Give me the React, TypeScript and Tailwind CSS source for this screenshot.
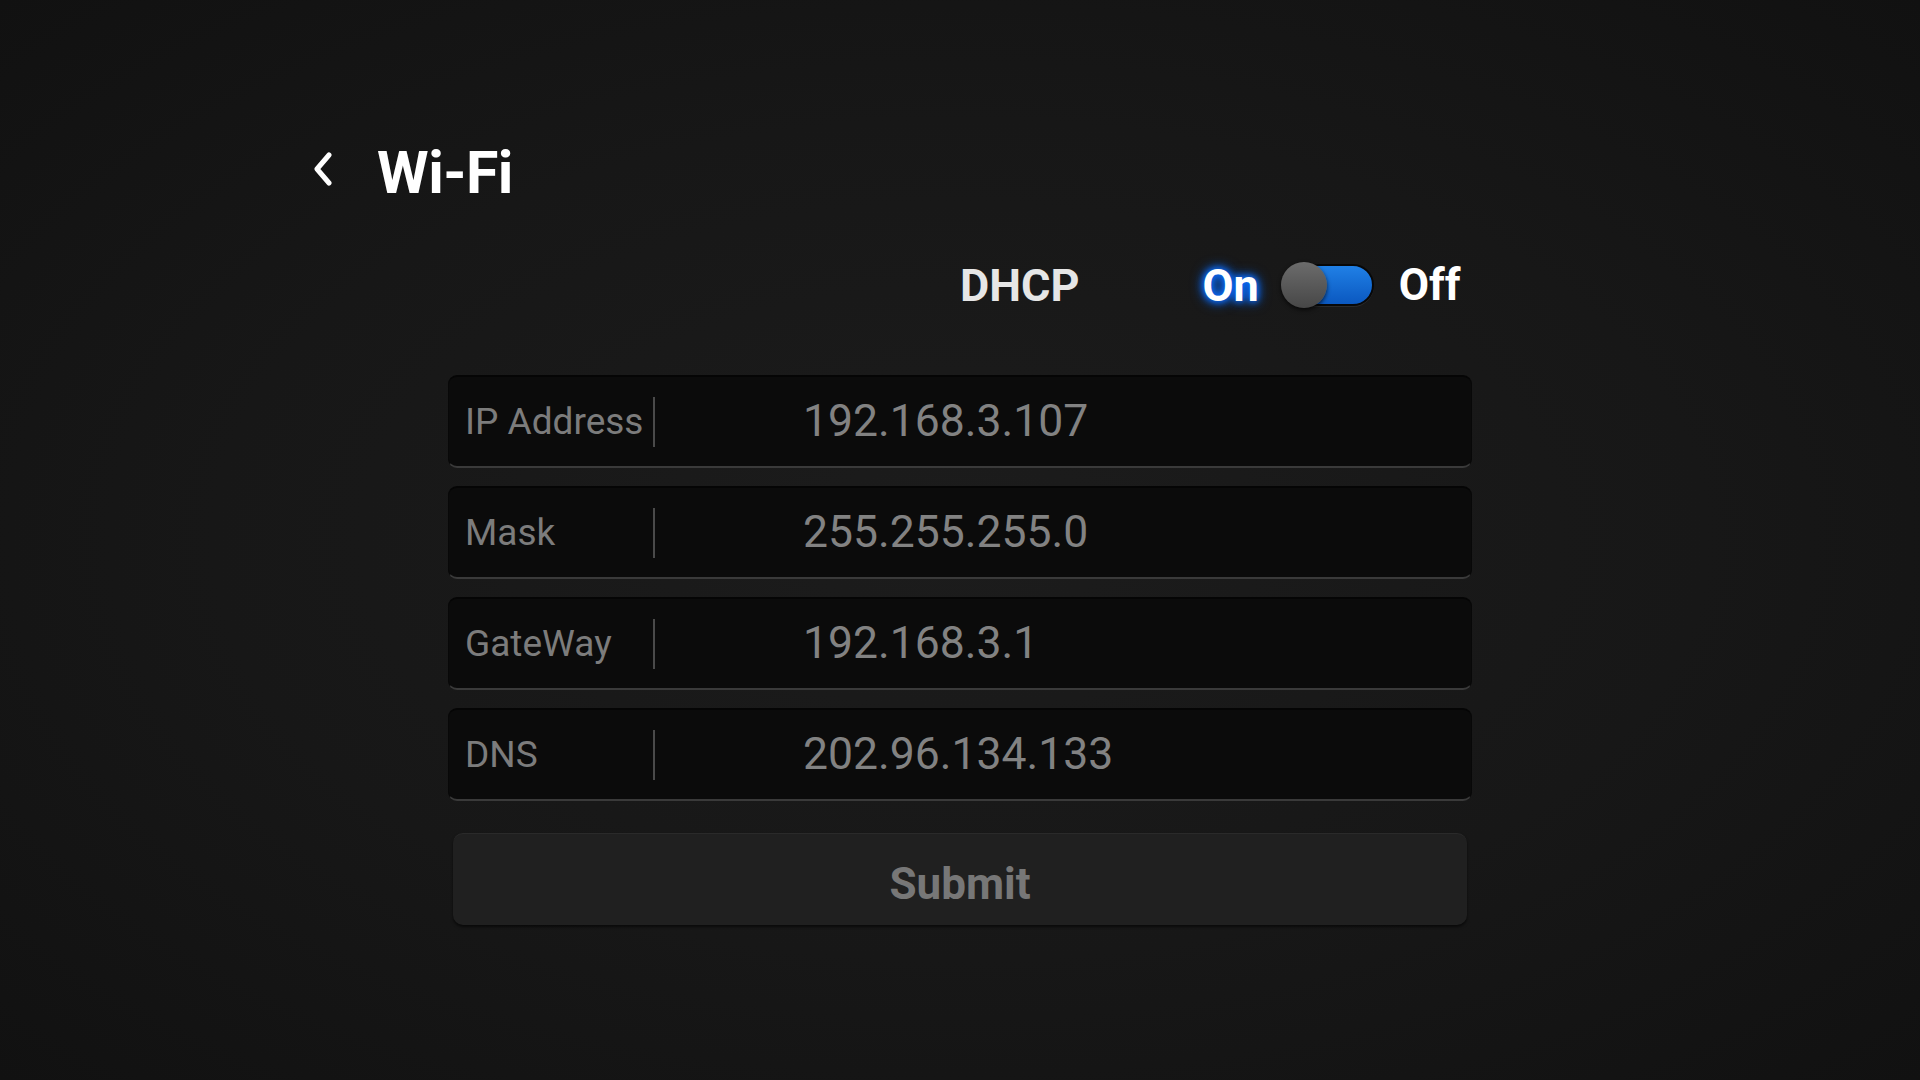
import { useState } from 'react'

const FIELDS = [
  { label: 'IP Address', value: '192.168.3.107' },
  { label: 'Mask', value: '255.255.255.0' },
  { label: 'GateWay', value: '192.168.3.1' },
  { label: 'DNS', value: '202.96.134.133' },
]

function Toggle({ on, onChange }: { on: boolean; onChange: () => void }) {
  return (
    <button
      type="button"
      onClick={onChange}
      className="relative flex h-[46px] w-[93px] items-center"
    >
      <span className="ml-[17px] h-[42px] w-[76px] rounded-full border-2 border-[#080808] bg-gradient-to-b from-[#2080e6] to-[#0b58c0] shadow-[0_1px_0_#2a2a2a]" />
      <span
        className={
          on
            ? 'absolute left-0 top-0 h-[46px] w-[46px] rounded-full bg-gradient-to-b from-[#6c6c6c] to-[#474747] shadow-[0_2px_4px_rgba(0,0,0,0.7)]'
            : 'absolute right-0 top-0 h-[46px] w-[46px] rounded-full bg-gradient-to-b from-[#6c6c6c] to-[#474747] shadow-[0_2px_4px_rgba(0,0,0,0.7)]'
        }
      />
    </button>
  )
}

export default function App() {
  const [dhcp, setDhcp] = useState(true)

  return (
    <div className="min-h-screen w-full bg-[radial-gradient(ellipse_at_center,#1c1c1c_0%,#171717_55%,#111111_100%)] font-['Roboto',sans-serif]">
      <div className="mx-auto w-[1294px] pt-[150px]">
        {/* header */}
        <div className="flex h-[44px] items-center">
          <svg width="22" height="34" viewBox="0 0 22 34" className="-ml-[1px] -mt-[7px]">
            <path d="M17 3 L5 17 L17 31" fill="none" stroke="#ffffff" strokeWidth="5" strokeLinecap="round" strokeLinejoin="round" />
          </svg>
          <h1 className="ml-[43px] text-[59px] font-bold leading-none tracking-[-0.5px] text-white">Wi-Fi</h1>
        </div>

        <div className="ml-[135px] w-[1024px]">
          {/* DHCP row */}
          <div className="mt-[68px] flex h-[46px] items-center">
            <span className="ml-[512px] text-[45px] font-bold leading-none text-[#e6e6e6]">DHCP</span>
            <span className="ml-[123px] text-[45px] font-bold leading-none text-white [text-shadow:0_0_6px_#0a6cff,0_0_10px_#0a6cff,0_0_14px_#0a6cff]">
              On
            </span>
            <div className="ml-[22px]">
              <Toggle on={dhcp} onChange={() => setDhcp(!dhcp)} />
            </div>
            <span className="ml-[25px] text-[44px] font-bold leading-none text-white">Off</span>
          </div>

          {/* fields */}
          <div className="mt-[67px] flex flex-col gap-[18px]">
            {FIELDS.map((f) => (
              <div
                key={f.label}
                className="flex h-[93px] items-center rounded-[9px] border-x border-t-2 border-b-2 border-x-[#080808] border-t-[#050505] border-b-[#3a3a3a] bg-[#0b0b0b]"
              >
                <span className="ml-[16px] w-[188px] text-[37px] leading-none text-[#7c7c7c]">{f.label}</span>
                <span className="h-[50px] w-[2px] bg-[#4a4a4a]" />
                <span className="ml-[148px] text-[44.5px] leading-none text-[#828282]">{f.value}</span>
              </div>
            ))}
          </div>

          {/* submit */}
          <button
            type="button"
            className="mx-auto mt-[32px] flex h-[92px] w-[1014px] items-center justify-center rounded-[10px] border-t border-t-[#2a2a2a] bg-[#202020] pt-[8px] text-[44px] font-bold leading-none text-[#777777] shadow-[0_2px_3px_rgba(0,0,0,0.6)]"
          >
            Submit
          </button>
        </div>
      </div>
    </div>
  )
}
